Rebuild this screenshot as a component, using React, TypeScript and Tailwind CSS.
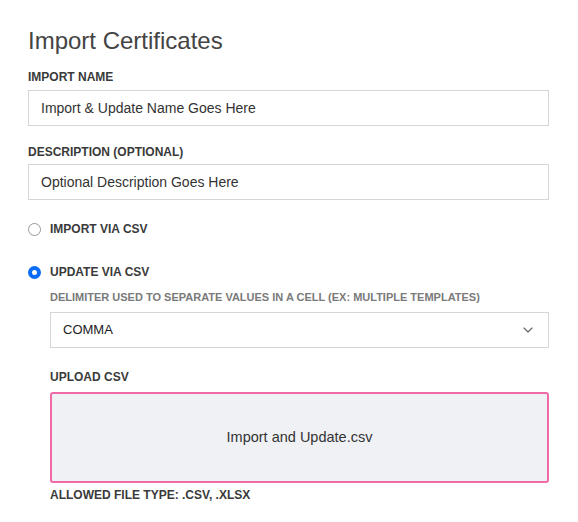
import { ChevronDown } from "lucide-react";

function Label({ children, className = "" }: { children: React.ReactNode; className?: string }) {
  return (
    <div className={`text-[12px] font-bold uppercase leading-[14px] text-[#3a3a3a] ${className}`}>
      {children}
    </div>
  );
}

function Radio({ checked, label }: { checked?: boolean; label: string }) {
  return (
    <label className="flex items-center gap-[9px]">
      {checked ? (
        <span className="flex h-[13px] w-[13px] items-center justify-center rounded-full bg-[#0b6cf5]">
          <span className="h-[5px] w-[5px] rounded-full bg-white" />
        </span>
      ) : (
        <span className="h-[13px] w-[13px] rounded-full border border-[#999] bg-white" />
      )}
      <span className="text-[12px] font-bold uppercase text-[#3a3a3a]">{label}</span>
    </label>
  );
}

export default function App() {
  return (
    <div className="min-h-screen bg-white pl-[28px] pr-[29px] pt-[27px] font-['Liberation_Sans',Arial,sans-serif] text-[#333]">
      <h1 className="text-[24px] leading-[28px] text-[#444]">Import Certificates</h1>

      <Label className="mt-[15px]">Import Name</Label>
      <div className="mt-[6px] flex h-[36px] items-center border border-[#d6d6d6] px-[12px] text-[14px] text-[#333]">
        Import &amp; Update Name Goes Here
      </div>

      <Label className="mt-[19px]">Description (Optional)</Label>
      <div className="mt-[5px] flex h-[36px] items-center border border-[#d6d6d6] px-[12px] text-[14px] text-[#333]">
        Optional Description Goes Here
      </div>

      <div className="mt-[20px]">
        <Radio label="Import via CSV" />
      </div>
      <div className="mt-[25px]">
        <Radio checked label="Update via CSV" />
      </div>

      <div className="pl-[22px]">
        <div className="mt-[10px] text-[11px] font-bold uppercase leading-[13px] text-[#7a7a7a]">
          Delimiter used to separate values in a cell (ex: multiple templates)
        </div>
        <div className="mt-[8px] flex h-[36px] items-center justify-between border border-[#d6d6d6] pl-[12px] pr-[12px]">
          <span className="text-[13px] text-[#222]">COMMA</span>
          <ChevronDown className="h-[16px] w-[16px] text-[#666]" strokeWidth={1.75} />
        </div>

        <Label className="mt-[22px]">Upload CSV</Label>
        <div className="mt-[8px] flex h-[91px] items-center justify-center rounded-[3px] border-2 border-[#f06aa8] bg-[#f0f1f5] text-[14.5px] text-[#333]">
          Import and Update.csv
        </div>
        <Label className="mt-[5px]">Allowed file type: .csv, .xlsx</Label>
      </div>
    </div>
  );
}
